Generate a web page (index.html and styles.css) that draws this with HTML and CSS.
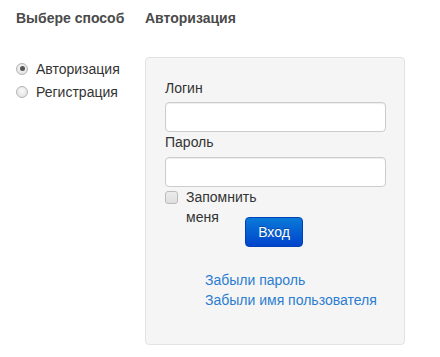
FILE: index.html
```html
<!DOCTYPE html>
<html lang="ru">
<head>
<meta charset="utf-8">
<title>Авторизация</title>
<link rel="stylesheet" href="styles.css">
</head>
<body>
<div class="page">
  <div class="side">
    <h3 class="title">Выбере способ</h3>
    <ul class="choices">
      <li><label class="choice"><input type="radio" name="mode" checked><span>Авторизация</span></label></li>
      <li><label class="choice"><input type="radio" name="mode"><span>Регистрация</span></label></li>
    </ul>
  </div>
  <div class="main">
    <h3 class="title">Авторизация</h3>
    <form class="panel">
      <label class="field-label first">Логин</label>
      <input class="field" type="text">
      <label class="field-label">Пароль</label>
      <input class="field second" type="password">
      <div class="actions">
        <label class="remember"><input type="checkbox"><span>Запомнить меня</span></label>
        <button type="button" class="btn">Вход</button>
      </div>
      <ul class="links">
        <li><a href="#">Забыли пароль</a></li>
        <li><a href="#">Забыли имя пользователя</a></li>
      </ul>
    </form>
  </div>
</div>
</body>
</html>
```
FILE: styles.css
```css
* { box-sizing: border-box; }
html, body { margin: 0; padding: 0; background: #fff; }
body {
  font-family: "Liberation Sans", Arial, sans-serif;
  font-size: 14px;
  color: #333;
}
.page {
  display: flex;
  padding: 10px 0 0 16px;
}
.side { width: 129px; }
.main { width: 260px; }
.title {
  margin: 0;
  font-size: 14px;
  font-weight: bold;
  line-height: 16px;
  color: #4a4a4a;
}
.choices {
  list-style: none;
  margin: 31px 0 0;
  padding: 0;
}
.choices li {
  height: 23px;
  display: flex;
  align-items: center;
}
.choice {
  display: flex;
  align-items: center;
  font-size: 14px;
  line-height: 16px;
  color: #333;
}
.choice input {
  -webkit-appearance: none;
  appearance: none;
  flex: none;
  margin: 0 8px 0 0;
  width: 12px;
  height: 12px;
  border-radius: 50%;
  border: 1px solid #b4b4b4;
  background: radial-gradient(circle at 50% 40%, #fafafa, #dcdcdc);
  position: relative;
}
.choice input:checked::after {
  content: "";
  position: absolute;
  left: 2.5px;
  top: 2.5px;
  width: 5px;
  height: 5px;
  border-radius: 50%;
  background: #555;
}
.panel {
  margin-top: 31px;
  height: 288px;
  background: #f5f5f5;
  border: 1px solid #e3e3e3;
  border-radius: 4px;
  padding: 20px 0 0 19px;
}
.field-label {
  display: block;
  font-size: 14px;
  line-height: 20px;
  color: #333;
}
.field {
  display: block;
  width: 221px;
  height: 30px;
  margin: 4px 0 0;
  border: 1px solid #ccc;
  border-radius: 4px;
  background: #fff;
  box-shadow: inset 0 1px 1px rgba(0,0,0,0.075);
}
.field.second { margin-top: 5px; }
.actions {
  display: flex;
  align-items: flex-start;
}
.remember {
  display: flex;
  align-items: flex-start;
  width: 80px;
  font-size: 14px;
  line-height: 20px;
  color: #333;
}
.remember input {
  -webkit-appearance: none;
  appearance: none;
  flex: none;
  margin: 4px 8px 0 0;
  width: 13px;
  height: 13px;
  border: 1px solid #bcbcbc;
  border-radius: 3px;
  background: linear-gradient(#ececec, #dedede);
}
.btn {
  margin: 30px 0 0 0;
  width: 58px;
  height: 30px;
  border: 1px solid #0041b8;
  border-radius: 4px;
  background: linear-gradient(#0a7ad8, #0044cc);
  color: #fff;
  font-family: "Liberation Sans", Arial, sans-serif;
  font-size: 14px;
  padding: 0;
  text-shadow: 0 -1px 0 rgba(0,0,0,0.25);
}
.links {
  list-style: none;
  margin: 23px 0 0 40px;
  padding: 0;
}
.links li { line-height: 20px; }
.links a {
  color: #2b7dd1;
  text-decoration: none;
  font-size: 14px;
}
```
